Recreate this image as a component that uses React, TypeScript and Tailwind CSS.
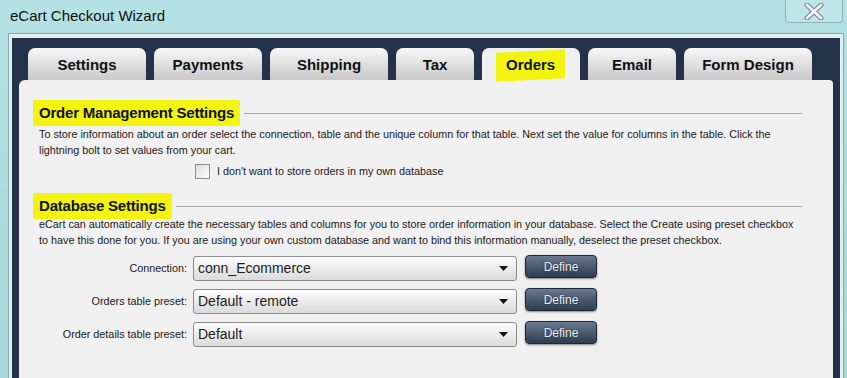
import React from "react";

const tabs = ["Settings", "Payments", "Shipping", "Tax", "Orders", "Email", "Form Design"];
const tabWidths: Record<string, string> = {
  Settings: "w-[118px]",
  Payments: "w-[108px]",
  Shipping: "w-[118px]",
  Tax: "w-[78px]",
  Orders: "w-[98px]",
  Email: "w-[88px]",
  "Form Design": "w-[128px]",
};

const rows = [
  { label: "Connection:", value: "conn_Ecommerce" },
  { label: "Orders table preset:", value: "Default - remote" },
  { label: "Order details table preset:", value: "Default" },
];

function CloseIcon() {
  return (
    <svg width="24" height="17" viewBox="0 0 24 17">
      <path d="M5 2 L19 15 M19 2 L5 15" stroke="#6f7f86" strokeWidth="5" strokeLinecap="round" />
      <path d="M5 2 L19 15 M19 2 L5 15" stroke="#f4f7f8" strokeWidth="3" strokeLinecap="round" />
    </svg>
  );
}

function SectionHeading({ title }: { title: string }) {
  return (
    <div className="flex items-center">
      <span className="-mx-[6px] -my-[4px] rounded-[2px] bg-[#f3f312] px-[6px] py-[4px] text-[15px] font-bold leading-[18px] tracking-[-0.2px] text-[#111]">
        {title}
      </span>
      <div className="ml-[10px] h-px flex-1 bg-[#a8a8a8]" />
    </div>
  );
}

export default function App() {
  return (
    <div
      className="flex h-[378px] w-[847px] flex-col overflow-hidden bg-gradient-to-b from-[#b4e1e4] to-[#a9d6da]"
      style={{ fontFamily: '"Liberation Sans", Arial, sans-serif' }}
    >
      {/* Title bar */}
      <div className="flex h-[33px] shrink-0 items-start justify-between">
        <div className="pl-[10px] pt-[6px] text-[15px] leading-[20px] text-[#111]">eCart Checkout Wizard</div>
        <div className="mr-[4px] flex h-[23px] w-[58px] items-center justify-center rounded-b-[4px] border border-t-0 border-[#8fb4b8] bg-[#c4e8ea]/60">
          <CloseIcon />
        </div>
      </div>

      {/* Window frame */}
      <div className="ml-[8px] mr-[3px] flex flex-1 flex-col border border-b-0 border-[#8aa9ad] bg-[#e2eff0] px-[3px] pt-[4px]">
        <div className="flex flex-1 flex-col bg-[#24324a] px-[7px] pt-[10px]">
          {/* Tabs */}
          <div className="flex gap-[8px] pl-[9px]">
            {tabs.map((t) =>
              t === "Orders" ? (
                <div
                  key={t}
                  className={`${tabWidths[t]} flex h-[32px] items-center justify-center rounded-t-[7px] bg-[#f0f0f0] pt-[2px] text-[15px] font-bold text-[#111]`}
                >
                  <span className="-skew-y-3 bg-[#f3f312] px-[10px] py-[3px]">
                    <span className="inline-block skew-y-3">{t}</span>
                  </span>
                </div>
              ) : (
                <div
                  key={t}
                  className={`${tabWidths[t]} flex h-[32px] items-center justify-center rounded-t-[7px] bg-gradient-to-b from-[#f7f7f7] to-[#c9c9c9] pt-[2px] text-[15px] font-bold text-[#111]`}
                >
                  {t}
                </div>
              )
            )}
          </div>

          {/* Content */}
          <div className="flex-1 rounded-tl-[6px] rounded-tr-[4px] bg-[#f0f0f0] pl-[20px] pr-[31px] pt-[24px]">
            <SectionHeading title="Order Management Settings" />
            <p className="-mr-[2px] mt-[4px] text-[10.8px] leading-[16px] text-[#1a1a1a]">
              To store information about an order select the connection, table and the unique column for that table. Next set the value for columns in the table. Click the lightning bolt to set values from your cart.
            </p>
            <div className="mt-[5px] flex items-center gap-[7px] pl-[156px]">
              <div className="h-[15px] w-[15px] border border-[#8e8f8f] bg-gradient-to-br from-[#dcdcdc] to-[#fbfbfb]" />
              <span className="text-[10.8px] leading-[16px] text-[#1a1a1a]">I don't want to store orders in my own database</span>
            </div>

            <div className="mt-[18px]">
              <SectionHeading title="Database Settings" />
            </div>
            <p className="-mr-[2px] mt-[1px] text-[10.8px] leading-[16px] text-[#1a1a1a]">
              eCart can automatically create the necessary tables and columns for you to store order information in your database. Select the Create using preset checkbox to have this done for you. If you are using your own custom database and want to bind this information manually, deselect the preset checkbox.
            </p>

            <div className="mt-[8px] flex flex-col gap-[8px]">
              {rows.map((r) => (
                <div key={r.label} className="flex items-start">
                  <div className="w-[154px] pr-[6px] text-right text-[10.8px] leading-[25px] text-[#1a1a1a]">{r.label}</div>
                  <div className="flex h-[25px] w-[324px] items-center justify-between rounded-[3px] border border-[#8c8c8c] bg-gradient-to-b from-[#fdfdfd] to-[#dadada] pl-[4px] pr-[8px]">
                    <span className="text-[14px] text-[#1c1c1c]">{r.value}</span>
                    <svg width="9" height="5" viewBox="0 0 9 5">
                      <path d="M0 0 H9 L4.5 5 Z" fill="#111" />
                    </svg>
                  </div>
                  <div className="-mt-px ml-[8px] flex h-[23px] w-[72px] items-center justify-center rounded-[4px] border border-[#1d2738] bg-gradient-to-b from-[#6b7a90] to-[#2f3c51] text-[12px] text-[#e9eef4] shadow-[0_1px_2px_rgba(0,0,0,0.45)] [text-shadow:0_0_2px_rgba(0,0,0,0.6)]">
                    Define
                  </div>
                </div>
              ))}
            </div>
          </div>
        </div>
      </div>
    </div>
  );
}
